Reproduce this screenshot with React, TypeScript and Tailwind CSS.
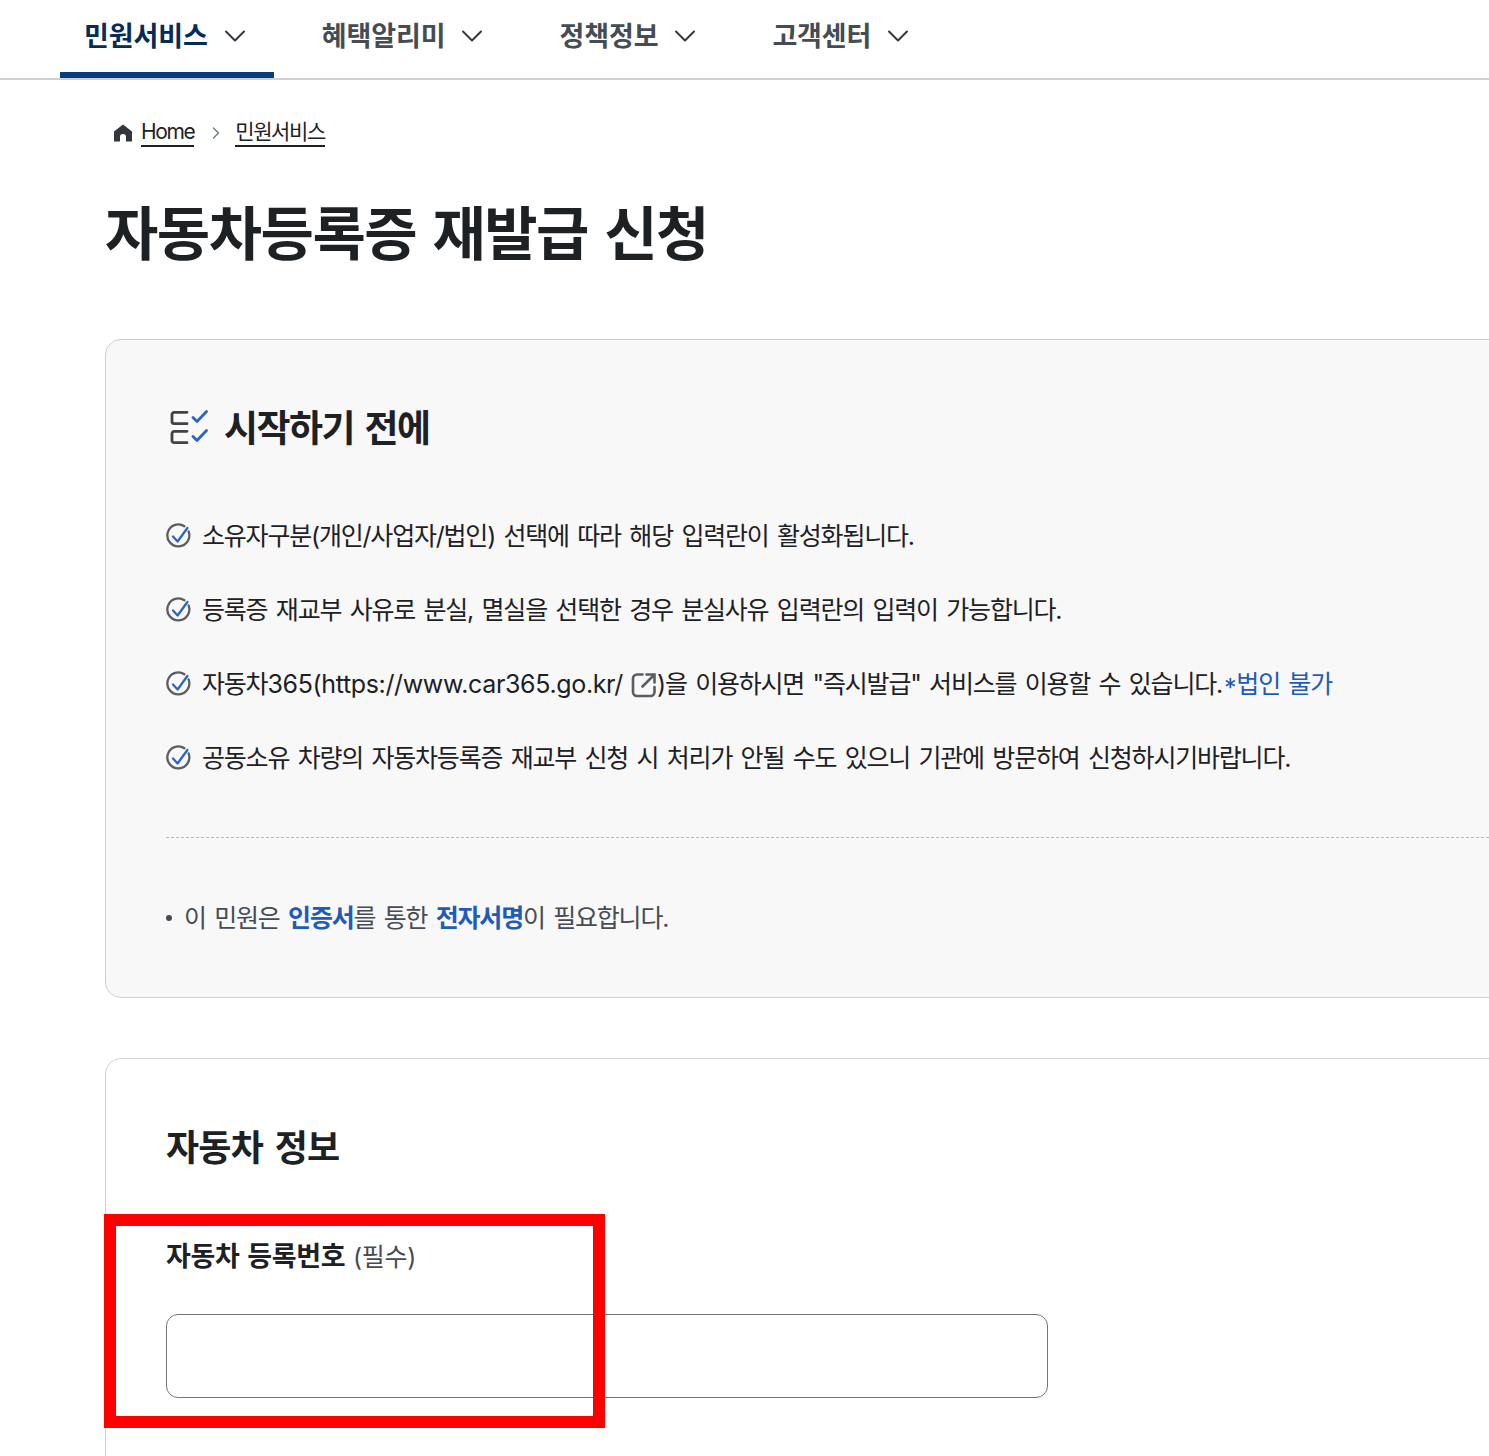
import { ChevronDown, ChevronRight } from "lucide-react";

const font = { fontFamily: 'Inter, "Noto Sans CJK KR", "Noto Sans", sans-serif' };

const navItems = [
  { label: "민원서비스", active: true },
  { label: "혜택알리미", active: false },
  { label: "정책정보", active: false },
  { label: "고객센터", active: false },
];

function CheckCircle() {
  return (
    <svg width="26" height="26" viewBox="0 0 26 26" fill="none" className="shrink-0">
      <path d="M22.6 8.4A11 11 0 1 1 18.4 3.2" stroke="#5a5d62" strokeWidth="2.3" strokeLinecap="round" />
      <path d="M7 13.5l4.6 5L21.4 5" stroke="#2b64c9" strokeWidth="2.3" strokeLinecap="round" strokeLinejoin="round" />
    </svg>
  );
}

function ListCheckIcon() {
  return (
    <svg width="38" height="38" viewBox="0 0 38 38" fill="none" className="shrink-0">
      <path d="M17 3.3H4.2a2.2 2.2 0 0 0-2.2 2.2v7a2.2 2.2 0 0 0 2.2 2.2H17" stroke="#3f4247" strokeWidth="2.8" strokeLinecap="round" />
      <path d="M17 22.3H4.2a2.2 2.2 0 0 0-2.2 2.2v7a2.2 2.2 0 0 0 2.2 2.2H17" stroke="#3f4247" strokeWidth="2.8" strokeLinecap="round" />
      <path d="M23 8.5l4 4L36.5 2.5M23 27.5l4 4 9.5-10" stroke="#2b64c9" strokeWidth="2.8" strokeLinecap="round" strokeLinejoin="round" />
    </svg>
  );
}

function ExternalIcon() {
  return (
    <svg width="26" height="26" viewBox="0 0 26 26" fill="none" className="inline-block align-[-5px] ml-[8px]">
      <path d="M11.5 2.5H6a4 4 0 0 0-4 4v13.5a4 4 0 0 0 4 4h13.5a4 4 0 0 0 4-4V15" stroke="#5a5d62" strokeWidth="2.6" strokeLinecap="round" />
      <path d="M11.5 14.5L23 3M15.5 2.5H23.5V10.5" stroke="#5a5d62" strokeWidth="2.6" strokeLinecap="round" />
    </svg>
  );
}

function HomeIcon() {
  return (
    <svg width="20" height="18" viewBox="0 0 20 18" className="mr-[8px] shrink-0">
      <path d="M10 .5L19 7.4V17.5H13V12.5Q13 10 10 10Q7 10 7 12.5V17.5H1V7.4Z" fill="#33363d" />
    </svg>
  );
}

export default function App() {
  return (
    <div style={font} className="relative w-[1489px] h-[1456px] overflow-hidden bg-white text-[#1e2124]">
      <header className="flex gap-[24px] h-[80px] border-b-2 border-[#cdd1d5] pl-[60px]">
        {navItems.map((item) => (
          <div
            key={item.label}
            className={`h-[78px] flex items-center pl-[24px] pr-[21px] gap-[9px] border-b-[6px] ${item.active ? "border-[#0b3b78]" : "border-transparent"}`}
          >
            <span className={`text-[27px] font-bold tracking-[-0.1px] leading-none ${item.active ? "text-[#052b57]" : "text-[#464c53]"}`}>{item.label}</span>
            <ChevronDown size={36} strokeWidth={1.3} className="text-[#33363d]" />
          </div>
        ))}
      </header>

      <main className="pl-[105px] w-[1700px]">
        <nav className="flex items-center h-[106px] pl-[8px] text-[21px] tracking-[-1.4px]">
          <HomeIcon />
          <span className="border-b-2 border-[#1e2124] leading-[26px]">Home</span>
          <ChevronRight size={20} strokeWidth={1.6} className="ml-[12px] mr-[9px] text-[#6d7882]" />
          <span className="border-b-2 border-[#1e2124] leading-[26px]">민원서비스</span>
        </nav>

        <h1 className="text-[58px] font-bold leading-[84px] tracking-[-1.5px] [word-spacing:4px] mt-[6px]">자동차등록증 재발급 신청</h1>

        <section className="mt-[63px] h-[659px] rounded-[16px] border border-[#cdd1d5] bg-[#f8f8f9] pl-[60px] pt-[56px]">
          <div className="flex items-center gap-[16px] h-[64px] pl-[4px]">
            <ListCheckIcon />
            <h2 className="text-[37px] font-bold tracking-[-1.5px] [word-spacing:3px] leading-none">시작하기 전에</h2>
          </div>
          <ul className="mt-[57px] flex flex-col gap-[36px] text-[25px] tracking-[-1.2px] [word-spacing:2.6px] leading-[38px]">
            <li className="flex items-center gap-[10px]"><CheckCircle />소유자구분(개인/사업자/법인) 선택에 따라 해당 입력란이 활성화됩니다.</li>
            <li className="flex items-center gap-[10px]"><CheckCircle />등록증 재교부 사유로 분실, 멸실을 선택한 경우 분실사유 입력란의 입력이 가능합니다.</li>
            <li className="flex items-center gap-[10px]">
              <CheckCircle />
              <span>
                자동차<span className="tracking-[-0.35px]">365(https://www.car365.go.kr/</span>
                <ExternalIcon />)을 이용하시면 "즉시발급" 서비스를 이용할 수 있습니다.
                <span className="text-[#1f5bb8]"><span className="inline-block translate-y-[4px] ml-[2px] mr-[1px]">*</span>법인 불가</span>
              </span>
            </li>
            <li className="flex items-center gap-[10px]"><CheckCircle />공동소유 차량의 자동차등록증 재교부 신청 시 처리가 안될 수도 있으니 기관에 방문하여 신청하시기바랍니다.</li>
          </ul>
          <div className="mt-[60px] border-t border-dashed border-[#b1b8be]" />
          <p className="mt-[61px] flex items-center text-[25px] tracking-[-1.2px] [word-spacing:2.6px] leading-[38px] text-[#464c53]">
            <span className="w-[6px] h-[6px] rounded-full bg-[#464c53] mr-[12px]" />
            <span>이 민원은 <b className="text-[#1f5bb8]">인증서</b>를 통한 <b className="text-[#1f5bb8]">전자서명</b>이 필요합니다.</span>
          </p>
        </section>

        <section className="mt-[60px] h-[500px] rounded-t-[16px] border border-[#cdd1d5] pl-[60px] pt-[62px]">
          <h2 className="text-[36px] font-bold tracking-[-0.8px] [word-spacing:4px] leading-[54px]">자동차 정보</h2>
          <label className="block mt-[62px] text-[27px] font-bold tracking-[-0.3px] [word-spacing:1.5px] leading-[40px]">
            자동차 등록번호 <span className="text-[25px] font-normal text-[#464c53]">(필수)</span>
          </label>
          <input className="block mt-[37px] w-[882px] h-[84px] rounded-[12px] border border-[#757575] bg-white" />
        </section>
      </main>

      <div className="absolute left-[104px] top-[1214px] w-[501px] h-[214px] border-[12px] border-[#ff0000]" />
    </div>
  );
}
